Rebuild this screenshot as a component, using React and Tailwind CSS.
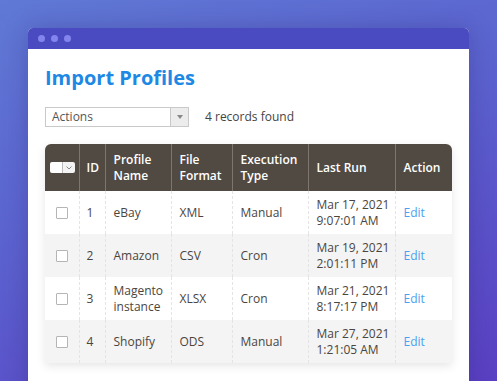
import React from "react";

const rows = [
  { id: 1, name: ["eBay"], fmt: "XML", type: "Manual", date: "Mar 17, 2021", time: "9:07:01 AM" },
  { id: 2, name: ["Amazon"], fmt: "CSV", type: "Cron", date: "Mar 19, 2021", time: "2:01:11 PM" },
  { id: 3, name: ["Magento", "instance"], fmt: "XLSX", type: "Cron", date: "Mar 21, 2021", time: "8:17:17 PM" },
  { id: 4, name: ["Shopify"], fmt: "ODS", type: "Manual", date: "Mar 27, 2021", time: "1:21:05 AM" },
];

export default function App() {
  return (
    <div
      className="w-[497px] h-[381px] overflow-hidden bg-[linear-gradient(160deg,#6079d5_0%,#5b62cf_45%,#5a40c3_100%)] pt-[28px] pl-[28px]"
      style={{ fontFamily: '"Open Sans", "Noto Sans", sans-serif' }}
    >
      <div className="w-[441px] h-[400px] bg-white rounded-t-[5px] overflow-hidden shadow-[0_0_24px_rgba(30,20,90,0.25)]">
        <div className="h-[21px] bg-[#4a4bc0] flex items-center gap-[6px] pl-[10px]">
          <span className="w-[7px] h-[7px] rounded-full bg-[#8484ee]" />
          <span className="w-[7px] h-[7px] rounded-full bg-[#8484ee]" />
          <span className="w-[7px] h-[7px] rounded-full bg-[#8484ee]" />
        </div>
        <div className="px-[17px]">
          <h1 className="mt-[15px] text-[20px] leading-[27px] font-bold text-[#1e88e5]">Import Profiles</h1>
          <div className="mt-[16px] flex items-center">
            <div className="w-[144px] h-[20px] border border-[#c9c9c9] flex">
              <div className="flex-1 pl-[6px] text-[12px] leading-[18px] text-[#555]">Actions</div>
              <div className="w-[18px] bg-[#ececec] border-l border-[#c9c9c9] flex items-center justify-center">
                <svg width="6" height="4" viewBox="0 0 6 4"><path d="M0 0h6L3 4z" fill="#888" /></svg>
              </div>
            </div>
            <div className="ml-[16px] text-[12px] text-[#444]">4 records found</div>
          </div>
          <div className="mt-[17px] w-[407px] rounded-t-[6px] overflow-hidden shadow-[0_3px_10px_rgba(0,0,0,0.10)]">
            <table className="w-[407px] border-collapse table-fixed text-[12px] leading-[16px]">
              <colgroup>
                <col className="w-[34px]" />
                <col className="w-[26px]" />
                <col className="w-[66px]" />
                <col className="w-[61px]" />
                <col className="w-[76px]" />
                <col className="w-[87px]" />
                <col className="w-[57px]" />
              </colgroup>
              <thead>
                <tr className="h-[47px] bg-[#514a43] text-white text-left">
                  <th className="px-0 font-semibold">
                    <div className="ml-[5px] flex w-[25px] h-[11px] rounded-[2px] overflow-hidden">
                      <span className="w-[12px] h-full bg-white" />
                      <span className="w-[13px] h-full bg-[#f3f3f3] border-l border-[#bbb] flex items-center justify-center">
                        <svg width="6" height="4" viewBox="0 0 6 4"><path d="M0.5 0.5L3 3L5.5 0.5" fill="none" stroke="#888" strokeWidth="1" /></svg>
                      </span>
                    </div>
                  </th>
                  <th className="pl-[7px] font-semibold border-l border-[#7d756e]">ID</th>
                  <th className="pl-[8px] font-semibold border-l border-[#7d756e]">Profile<br />Name</th>
                  <th className="pl-[8px] font-semibold border-l border-[#7d756e]">File<br />Format</th>
                  <th className="pl-[8px] font-semibold border-l border-[#7d756e]">Execution<br />Type</th>
                  <th className="pl-[8px] font-semibold border-l border-[#7d756e]">Last Run</th>
                  <th className="pl-[8px] font-semibold border-l border-[#7d756e]">Action</th>
                </tr>
              </thead>
              <tbody className="text-[#4b4540]">
                {rows.map((r, i) => (
                  <tr key={r.id} className={i % 2 === 0 ? "h-[43px] bg-white" : "h-[43px] bg-[#f4f4f4]"}>
                    <td className="px-0">
                      <div className="ml-[11px] w-[12px] h-[12px] border border-[#b5b5b5] rounded-[1px] bg-white" />
                    </td>
                    <td className="pl-[7px] border-l border-dashed border-[#e4e4e4]">{r.id}</td>
                    <td className="pl-[8px] border-l border-dashed border-[#e4e4e4]">
                      {r.name.map((n, k) => (
                        <div key={k}>{n}</div>
                      ))}
                    </td>
                    <td className="pl-[8px] border-l border-dashed border-[#e4e4e4]">{r.fmt}</td>
                    <td className="pl-[8px] border-l border-dashed border-[#e4e4e4]">{r.type}</td>
                    <td className="pl-[8px] border-l border-dashed border-[#e4e4e4]">
                      <div>{r.date}</div>
                      <div>{r.time}</div>
                    </td>
                    <td className="pl-[8px] border-l border-dashed border-[#e4e4e4] text-[#4aa2ef]">Edit</td>
                  </tr>
                ))}
              </tbody>
            </table>
          </div>
        </div>
      </div>
    </div>
  );
}
